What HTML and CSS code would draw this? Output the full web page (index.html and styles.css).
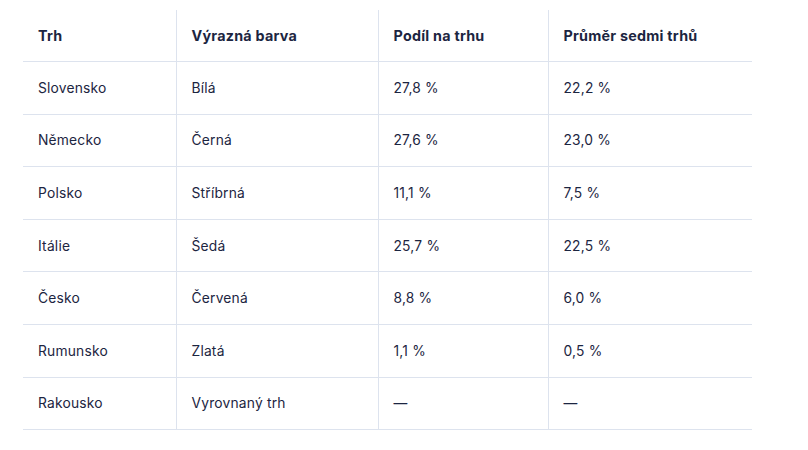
FILE: index.html
```html
<!DOCTYPE html>
<html lang="cs">
<head>
<meta charset="utf-8">
<title>Trhy</title>
<link rel="stylesheet" href="styles.css">
</head>
<body>
<div class="wrap">
<table class="market">
<colgroup>
<col class="c1"><col class="c2"><col class="c3"><col class="c4">
</colgroup>
<thead>
<tr><th>Trh</th><th>Výrazná barva</th><th>Podíl na trhu</th><th>Průměr sedmi trhů</th></tr>
</thead>
<tbody>
<tr><td>Slovensko</td><td>Bílá</td><td>27,8 %</td><td>22,2 %</td></tr>
<tr><td>Německo</td><td>Černá</td><td>27,6 %</td><td>23,0 %</td></tr>
<tr><td>Polsko</td><td>Stříbrná</td><td>11,1 %</td><td>7,5 %</td></tr>
<tr><td>Itálie</td><td>Šedá</td><td>25,7 %</td><td>22,5 %</td></tr>
<tr><td>Česko</td><td>Červená</td><td>8,8 %</td><td>6,0 %</td></tr>
<tr><td>Rumunsko</td><td>Zlatá</td><td>1,1 %</td><td>0,5 %</td></tr>
<tr><td>Rakousko</td><td>Vyrovnaný trh</td><td>—</td><td>—</td></tr>
</tbody>
</table>
</div>
</body>
</html>
```
FILE: styles.css
```css
html, body {
  margin: 0;
  padding: 0;
  background: #ffffff;
}
.wrap {
  padding: 10px 0 0 23px;
}
.market {
  border-collapse: collapse;
  table-layout: fixed;
  width: 729px;
  font-family: "Inter", "Liberation Sans", sans-serif;
  font-size: 13.8px;
  color: #1c2541;
}
.c1 { width: 153px; }
.c2 { width: 202px; }
.c3 { width: 170px; }
.c4 { width: 204px; }
.market th,
.market td {
  text-align: left;
  padding: 0 15px;
  vertical-align: middle;
  border-bottom: 1px solid #dde3ee;
  border-left: 1px solid #dde3ee;
}
.market th:first-child,
.market td:first-child {
  border-left: none;
}
.market th {
  font-weight: 700;
  font-size: 14.3px;
  letter-spacing: 0.25px;
  height: 51px;
}
.market td {
  font-weight: 400;
  height: 51.6px;
  letter-spacing: 0.2px;
}
```
